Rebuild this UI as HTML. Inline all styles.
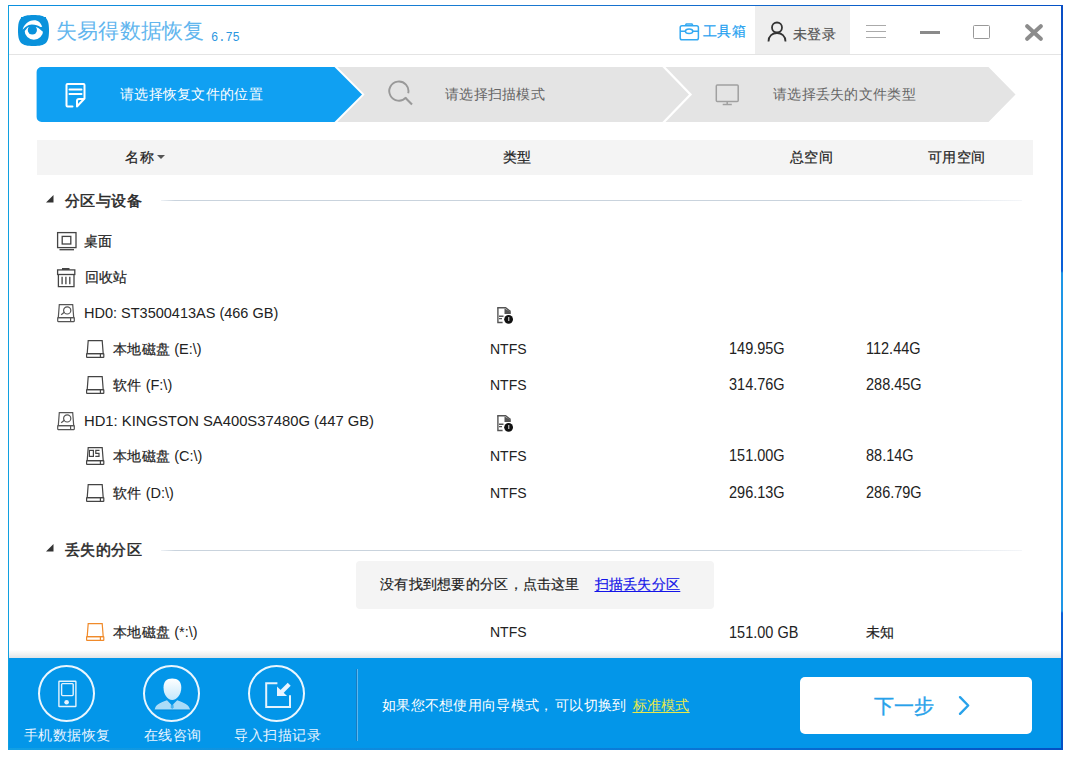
<!DOCTYPE html>
<html><head><meta charset="utf-8">
<style>
*{box-sizing:border-box;margin:0;padding:0}
html,body{width:1074px;height:760px;background:#fff;overflow:hidden;font-family:"Liberation Sans",sans-serif;color:#222}
.abs{position:absolute}
.t{position:absolute;white-space:nowrap;line-height:1}
.sk{-webkit-text-stroke:0.2px currentColor}
</style></head><body>
<div class="abs" style="left:9px;top:54px;width:1052px;height:1px;background:#e4e4e4"></div>
<div class="abs" style="left:755px;top:6px;width:95px;height:48px;background:#eeeeee"></div>
<svg class="abs" style="left:18px;top:14.5px" width="31" height="31" viewBox="65 50 650 650">
<path d="M390 50 C650 50 715 115 715 375 C715 635 650 700 390 700 C130 700 65 635 65 375 C65 115 130 50 390 50Z" fill="#0a92dc"/>
</svg>
<svg class="abs" style="left:21px;top:17px" width="25" height="25" viewBox="0 0 760 760">
<circle cx="392" cy="410" r="282" fill="#fff"/>
<path d="M0 0 H760 V470 L675 458 L565 365 C520 310 420 292 330 298 C270 303 225 312 200 322 L108 430 L0 440 Z" fill="#0a92dc"/>
<circle cx="345" cy="395" r="140" fill="#0a92dc"/>
<path d="M50 390 C80 250 220 100 400 100 C520 100 610 180 645 300 L590 305 C530 250 440 225 330 225 C200 230 100 320 50 390 Z" fill="#fff"/>
</svg>
<div class="t" style="left:56px;top:20px;font-size:21px;color:#62b6ee;letter-spacing:0.2px;">失易得数据恢复</div>
<div class="t" style="left:211px;top:32px;font-size:12px;color:#2a96e0;font-family:'Liberation Mono',monospace">6.75</div>
<svg class="abs" style="left:679px;top:22px" width="21" height="20" viewBox="0 0 21 20">
<g fill="none" stroke="#33a9f2" stroke-width="1.5">
<rect x="1.2" y="3.7" width="18.2" height="14.1" rx="1.8"/>
<path d="M6.3 3.7 L7.3 1.9 H12.9 L13.9 3.7"/>
<path d="M1.2 9.2 H6.4 M13.8 9.2 H19.4"/>
<ellipse cx="10.1" cy="9.3" rx="3.7" ry="2.3"/>
</g></svg>
<div class="t sk" style="left:703px;top:24px;font-size:14px;color:#1e9ff0;letter-spacing:0.3px;">工具箱</div>
<svg class="abs" style="left:767px;top:21px" width="20" height="21" viewBox="0 0 20 21">
<g fill="none" stroke="#333" stroke-width="1.8">
<circle cx="10" cy="6.5" r="5"/>
<path d="M1.5 20.5 C1.5 15 5.5 12 10 12 C14.5 12 18.5 15 18.5 20.5"/>
</g></svg>
<div class="t sk" style="left:793px;top:27px;font-size:14px;color:#555;letter-spacing:0.3px;">未登录</div>
<div class="abs" style="left:866px;top:25px;width:20px;height:1.4px;background:#aaa"></div>
<div class="abs" style="left:866px;top:31px;width:20px;height:1.4px;background:#aaa"></div>
<div class="abs" style="left:866px;top:37px;width:20px;height:1.4px;background:#aaa"></div>
<div class="abs" style="left:920px;top:31.4px;width:20px;height:2.2px;background:#8a8a8a"></div>
<div class="abs" style="left:973.3px;top:25.3px;width:16.5px;height:14px;border:1.8px solid #999;border-radius:1.5px"></div>
<svg class="abs" style="left:1025px;top:24px" width="18" height="17" viewBox="0 0 18 17">
<path d="M2.2 2.2 L15.8 14.8 M15.8 2.2 L2.2 14.8" stroke="#8c8c8c" stroke-width="4" stroke-linecap="round"/>
</svg>
<svg class="abs" style="left:36px;top:67px" width="990" height="55" viewBox="0 0 990 55">
<path d="M301.3 0 H952.5 L979.5 27.5 L952.5 55 H301.3 L328.6 27.5 Z" fill="#e4e4e4"/>
<path d="M0.6 5 A5 5 0 0 1 5.6 0 H298.5 L326 27.5 L298.5 55 H5.6 A5 5 0 0 1 0.6 50 Z" fill="#10a0f2"/>
<path d="M627 -1 L654.5 27.5 L627 56" fill="none" stroke="#fff" stroke-width="2.3"/>
</svg>
<svg class="abs" style="left:60px;top:78px" width="32" height="34" viewBox="0 0 32 34">
<g fill="none" stroke="#fff" stroke-width="2" stroke-linecap="round" stroke-linejoin="round">
<path d="M12.5 28.5 H7.5 Q6.5 28.5 6.5 27.5 V7 Q6.5 6 7.5 6 H23.5 Q24.5 6 24.5 7 V20.5"/>
<path d="M9.5 11.5 H21.5 M9.5 16 H21.5"/>
<path d="M17 28.5 V23 Q17 21 19 21 H24 L17 28.5"/>
</g></svg>
<svg class="abs" style="left:387px;top:80px" width="28" height="28" viewBox="0 0 28 28">
<g fill="none" stroke="#999" stroke-width="1.9">
<path d="M21.2 13.3 A9.6 9.6 0 1 0 19.1 17.4"/>
<path d="M18.3 17.8 L25 24.6" stroke-width="2.1"/>
</g></svg>
<svg class="abs" style="left:715px;top:83px" width="25" height="24" viewBox="0 0 25 24">
<g fill="none" stroke="#a0a0a0" stroke-width="1.5">
<rect x="1.3" y="1.9" width="21.9" height="16.6" rx="1"/>
<path d="M12.2 18.5 V21.2 M7.7 21.6 H16.8"/>
</g></svg>
<div class="t" style="left:120px;top:87px;font-size:14px;color:#fff;letter-spacing:0.3px;">请选择恢复文件的位置</div>
<div class="t" style="left:445px;top:87px;font-size:14px;color:#666;letter-spacing:0.3px;">请选择扫描模式</div>
<div class="t" style="left:773px;top:87px;font-size:14px;color:#666;letter-spacing:0.3px;">请选择丢失的文件类型</div>
<div class="abs" style="left:37px;top:140px;width:996px;height:35px;background:#f4f4f4"></div>
<div class="t sk" style="left:125px;top:150px;font-size:14px;color:#222;letter-spacing:0.6px;">名称</div>
<svg class="abs" style="left:157px;top:155px" width="8" height="4"><path d="M0 0 H8 L4 4Z" fill="#555"/></svg>
<div class="t sk" style="left:503px;top:150px;font-size:14px;color:#222;letter-spacing:0.3px;">类型</div>
<div class="t sk" style="left:790px;top:150px;font-size:14px;color:#222;letter-spacing:0.3px;">总空间</div>
<div class="t sk" style="left:928px;top:150px;font-size:14px;color:#222;letter-spacing:0.3px;">可用空间</div>
<svg class="abs" style="left:46px;top:195px" width="8" height="8"><path d="M7.5 0 V7.5 H0Z" fill="#333"/></svg>
<div class="t" style="left:65px;top:192.5px;font-size:15px;color:#2a2a2a;letter-spacing:0.4px;-webkit-text-stroke:0.5px #2a2a2a">分区与设备</div>
<div class="abs" style="left:161px;top:200px;width:861px;height:1px;background:linear-gradient(90deg,#eef2f6 0,#c9d3dd 14px,#c9d3dd 720px,#f4f6f9 100%)"></div>
<svg class="abs" style="left:56px;top:231px" width="22" height="21" viewBox="0 0 22 21">
<g fill="none" stroke="#444" stroke-width="1.3">
<rect x="1.6" y="1.6" width="18.4" height="15"/>
<rect x="6.2" y="5.4" width="8.6" height="7.6"/>
<path d="M3.5 18.7 H18"/>
</g></svg>
<div class="t sk" style="left:84px;top:234px;font-size:14px;color:#222;letter-spacing:0.3px;">桌面</div>
<svg class="abs" style="left:56px;top:267px" width="21" height="21" viewBox="0 0 21 21">
<g fill="none" stroke="#444" stroke-width="1.3">
<rect x="1.6" y="2.9" width="17.2" height="4.6"/>
<path d="M2.4 7.5 V19.6 H18 V7.5"/>
<path d="M6.1 9.8 V17.2 M9.9 9.8 V17.2 M13.8 9.8 V17.2"/>
</g><rect x="6" y="1" width="7.5" height="2" fill="#444"/></svg>
<div class="t sk" style="left:84.5px;top:270px;font-size:14px;color:#222;letter-spacing:0.3px;">回收站</div>
<svg class="abs" style="left:55px;top:302px" width="22" height="22" viewBox="0 0 22 22">
<g fill="none" stroke="#555" stroke-width="1.2">
<path d="M3.3 15.6 L4.3 2.6 H17.7 L18.7 15.6 Z"/>
<rect x="2.7" y="15.6" width="16.6" height="4" rx="0.5"/>
<path d="M15.6 15.8 V19.4"/>
<circle cx="12.2" cy="8.4" r="3.6"/>
<path d="M6.2 12.8 L9.6 10"/>
</g></svg>
<div class="t" style="left:84px;top:306px;font-size:14.5px;color:#222;">HD0: ST3500413AS (466 GB)</div>
<svg class="abs" style="left:495px;top:306px" width="18" height="20" viewBox="0 0 18 20">
<g fill="none" stroke="#555" stroke-width="1.4">
<path d="M2.9 1.8 V16.5 H7.6"/>
<path d="M2.2 1.8 H10.6 L15.6 5.6"/>
<path d="M4 10.2 H8.5 M4 12.6 H7"/>
</g>
<path d="M9.5 2.5 L15.8 6 V8 H9.5Z" fill="#555"/>
<circle cx="13.6" cy="13.3" r="4.4" fill="#111"/>
<rect x="13" y="11" width="1.4" height="4" fill="#aaa"/>
</svg>
<svg class="abs" style="left:84px;top:339px" width="22" height="22" viewBox="0 0 22 22">
<g fill="none" stroke="#444" stroke-width="1.2">
<path d="M3.2 14.6 L4.2 1.6 H18.2 L19.2 14.6 Z"/>
<rect x="2.6" y="14.6" width="17.2" height="3.8" rx="0.5"/>
<path d="M16.4 14.8 V18.2"/>
</g></svg>
<div class="t" style="left:113px;top:342px;font-size:14.5px;color:#222;"><span class="sk" style="font-size:14px;letter-spacing:0.3px">本地磁盘</span> (E:\)</div>
<div class="t" style="left:490px;top:342px;font-size:14px;color:#222;">NTFS</div>
<div class="t" style="left:729px;top:342.2px;font-size:14.5px;color:#222;transform:scaleY(1.1);transform-origin:0 13px">149.95G</div>
<div class="t" style="left:866px;top:342.2px;font-size:14.5px;color:#222;transform:scaleY(1.1);transform-origin:0 13px">112.44G</div>
<svg class="abs" style="left:84px;top:375px" width="22" height="22" viewBox="0 0 22 22">
<g fill="none" stroke="#444" stroke-width="1.2">
<path d="M3.2 14.6 L4.2 1.6 H18.2 L19.2 14.6 Z"/>
<rect x="2.6" y="14.6" width="17.2" height="3.8" rx="0.5"/>
<path d="M16.4 14.8 V18.2"/>
</g></svg>
<div class="t" style="left:113px;top:378px;font-size:14.5px;color:#222;"><span class="sk" style="font-size:14px;letter-spacing:0.3px">软件</span> (F:\)</div>
<div class="t" style="left:490px;top:378px;font-size:14px;color:#222;">NTFS</div>
<div class="t" style="left:729px;top:378.2px;font-size:14.5px;color:#222;transform:scaleY(1.1);transform-origin:0 13px">314.76G</div>
<div class="t" style="left:866px;top:378.2px;font-size:14.5px;color:#222;transform:scaleY(1.1);transform-origin:0 13px">288.45G</div>
<svg class="abs" style="left:55px;top:410px" width="22" height="22" viewBox="0 0 22 22">
<g fill="none" stroke="#555" stroke-width="1.2">
<path d="M3.3 15.6 L4.3 2.6 H17.7 L18.7 15.6 Z"/>
<rect x="2.7" y="15.6" width="16.6" height="4" rx="0.5"/>
<path d="M15.6 15.8 V19.4"/>
<circle cx="12.2" cy="8.4" r="3.6"/>
<path d="M6.2 12.8 L9.6 10"/>
</g></svg>
<div class="t" style="left:84px;top:414px;font-size:14.8px;color:#222;">HD1: KINGSTON SA400S37480G (447 GB)</div>
<svg class="abs" style="left:495px;top:414px" width="18" height="20" viewBox="0 0 18 20">
<g fill="none" stroke="#555" stroke-width="1.4">
<path d="M2.9 1.8 V16.5 H7.6"/>
<path d="M2.2 1.8 H10.6 L15.6 5.6"/>
<path d="M4 10.2 H8.5 M4 12.6 H7"/>
</g>
<path d="M9.5 2.5 L15.8 6 V8 H9.5Z" fill="#555"/>
<circle cx="13.6" cy="13.3" r="4.4" fill="#111"/>
<rect x="13" y="11" width="1.4" height="4" fill="#aaa"/>
</svg>
<svg class="abs" style="left:84px;top:446px" width="22" height="22" viewBox="0 0 22 22">
<g fill="none" stroke="#444" stroke-width="1.2">
<path d="M3.2 14.6 L4.2 1.6 H18.2 L19.2 14.6 Z"/>
<rect x="2.6" y="14.6" width="17.2" height="3.8" rx="0.5"/>
<path d="M16.4 14.8 V18.2"/>
</g><g fill="none" stroke="#444" stroke-width="1.2"><rect x="5.4" y="4.4" width="4" height="6"/><path d="M15.5 4.4 H11.8 V7.4 H15 V10.4 H11.3"/></g></svg>
<div class="t" style="left:113px;top:449px;font-size:14.5px;color:#222;"><span class="sk" style="font-size:14px;letter-spacing:0.3px">本地磁盘</span> (C:\)</div>
<div class="t" style="left:490px;top:449px;font-size:14px;color:#222;">NTFS</div>
<div class="t" style="left:729px;top:449.2px;font-size:14.5px;color:#222;transform:scaleY(1.1);transform-origin:0 13px">151.00G</div>
<div class="t" style="left:866px;top:449.2px;font-size:14.5px;color:#222;transform:scaleY(1.1);transform-origin:0 13px">88.14G</div>
<svg class="abs" style="left:84px;top:483px" width="22" height="22" viewBox="0 0 22 22">
<g fill="none" stroke="#444" stroke-width="1.2">
<path d="M3.2 14.6 L4.2 1.6 H18.2 L19.2 14.6 Z"/>
<rect x="2.6" y="14.6" width="17.2" height="3.8" rx="0.5"/>
<path d="M16.4 14.8 V18.2"/>
</g></svg>
<div class="t" style="left:113px;top:486px;font-size:14.5px;color:#222;"><span class="sk" style="font-size:14px;letter-spacing:0.3px">软件</span> (D:\)</div>
<div class="t" style="left:490px;top:486px;font-size:14px;color:#222;">NTFS</div>
<div class="t" style="left:729px;top:486.2px;font-size:14.5px;color:#222;transform:scaleY(1.1);transform-origin:0 13px">296.13G</div>
<div class="t" style="left:866px;top:486.2px;font-size:14.5px;color:#222;transform:scaleY(1.1);transform-origin:0 13px">286.79G</div>
<svg class="abs" style="left:46px;top:544px" width="8" height="8"><path d="M7.5 0 V7.5 H0Z" fill="#333"/></svg>
<div class="t" style="left:65px;top:541.5px;font-size:15px;color:#2a2a2a;letter-spacing:0.4px;-webkit-text-stroke:0.5px #2a2a2a">丢失的分区</div>
<div class="abs" style="left:161px;top:550px;width:861px;height:1px;background:linear-gradient(90deg,#eef2f6 0,#c9d3dd 14px,#c9d3dd 720px,#f4f6f9 100%)"></div>
<div class="abs" style="left:356px;top:561px;width:358px;height:48px;background:#f4f4f4;border-radius:4px"></div>
<div class="t sk" style="left:380px;top:577px;font-size:14px;color:#222;letter-spacing:0.3px;">没有找到想要的分区，</div>
<div class="t sk" style="left:522.5px;top:577px;font-size:14px;color:#222;letter-spacing:0.3px;">点击这里</div>
<div class="t sk" style="left:594.5px;top:577px;font-size:14px;color:#1414e8;letter-spacing:0.3px;text-decoration:underline;text-underline-offset:2px">扫描丢失分区</div>
<svg class="abs" style="left:84px;top:622px" width="22" height="22" viewBox="0 0 22 22">
<g fill="none" stroke="#f08a2a" stroke-width="1.2">
<path d="M3.2 14.6 L4.2 1.6 H18.2 L19.2 14.6 Z"/>
<rect x="2.6" y="14.6" width="17.2" height="3.8" rx="0.5"/>
<path d="M16.4 14.8 V18.2"/>
</g></svg>
<div class="t" style="left:113px;top:625px;font-size:14.5px;color:#222;"><span class="sk" style="font-size:14px;letter-spacing:0.3px">本地磁盘</span> (*:\)</div>
<div class="t" style="left:490px;top:625px;font-size:14px;color:#222;">NTFS</div>
<div class="t" style="left:729px;top:625.5px;font-size:14.5px;color:#222;transform:scaleY(1.1);transform-origin:0 13px">151.00 GB</div>
<div class="t sk" style="left:866px;top:625px;font-size:14px;color:#222;letter-spacing:0.3px;">未知</div>
<div class="abs" style="left:9px;top:650px;width:1052px;height:8px;background:linear-gradient(#fff,#f0f0f0 60%,#e0e4e8)"></div>
<div class="abs" style="left:9px;top:658px;width:1052px;height:91px;background:#0396e9"></div>
<div class="abs" style="left:38px;top:665px;width:57px;height:57px;border:2px solid #eaf6fe;border-radius:50%"></div>
<div class="abs" style="left:143px;top:665px;width:57px;height:57px;border:2px solid #eaf6fe;border-radius:50%"></div>
<div class="abs" style="left:248px;top:665px;width:57px;height:57px;border:2px solid #eaf6fe;border-radius:50%"></div>
<svg class="abs" style="left:35px;top:662px" width="64" height="64" viewBox="0 0 64 64">
<g fill="none" stroke="#e4f3fd" stroke-width="1.4"><rect x="23.9" y="19.2" width="17" height="25.3" rx="0.5"/><rect x="26.6" y="21.6" width="11.6" height="12" rx="1"/></g>
<circle cx="31.6" cy="40.2" r="2.3" fill="#e8f4ff"/></svg>
<svg class="abs" style="left:140px;top:662px" width="64" height="64" viewBox="0 0 64 64">
<defs><linearGradient id="pg" x1="0" y1="0" x2="0" y2="1"><stop offset="0" stop-color="#ffffff"/><stop offset="1" stop-color="#c4e8fc"/></linearGradient></defs>
<path d="M32.2 16.4 C38 16.4 41.3 19.5 41.3 25.5 C41.3 32.5 37 37.9 32.2 37.9 C27.4 37.9 23.5 32.5 23.5 25.5 C23.5 19.5 26.5 16.4 32.2 16.4Z" fill="url(#pg)"/>
<path d="M14.7 47.6 C15.5 43 19 40.8 27 38.2 L32 43.5 L37.2 38.2 C45 40.8 49 43 50.1 47.6 Z" fill="#aadcf8"/>
<path d="M31 42.4 H33.4 L33.8 45.5 L32.2 47 L30.6 45.5Z" fill="#0797ea" opacity="0.6"/>
<rect x="15" y="47.6" width="35" height="1.2" fill="#0680cc" opacity="0.35"/>
</svg>
<svg class="abs" style="left:245px;top:662px" width="64" height="64" viewBox="0 0 64 64">
<g fill="none" stroke="#e4f3fd" stroke-width="2"><path d="M32.4 21.2 H21.2 V45 H45 V33.3"/></g>
<path d="M32 24.4 V34.1 H42.1 Z" fill="#e8f4ff"/>
<path d="M44.2 22.2 L36 30.4" stroke="#e8f4ff" stroke-width="4.2" fill="none"/>
</svg>
<div class="abs" style="left:356px;top:669px;width:1px;height:72px;background:#1a7cc0"></div>
<div class="abs" style="left:357px;top:669px;width:1px;height:72px;background:#5ab8f0"></div>
<div class="abs" style="left:800px;top:677px;width:232px;height:57px;background:#fff;border-radius:5px"></div>
<svg class="abs" style="left:958px;top:695px" width="13" height="21" viewBox="0 0 13 21"><path d="M2 2.2 L10.2 10.5 L2 18.8" fill="none" stroke="#28a2ea" stroke-width="2.4" stroke-linecap="round" stroke-linejoin="round"/></svg>
<div class="t" style="left:23.5px;top:728px;font-size:14px;color:#e8f4ff;letter-spacing:0.5px;">手机数据恢复</div>
<div class="t" style="left:143.5px;top:728px;font-size:14px;color:#e8f4ff;letter-spacing:0.5px;">在线咨询</div>
<div class="t" style="left:234px;top:728px;font-size:14px;color:#e8f4ff;letter-spacing:0.5px;">导入扫描记录</div>
<div class="t" style="left:382px;top:698px;font-size:14px;color:#fff;letter-spacing:0.3px;">如果您不想使用向导模式，</div>
<div class="t" style="left:555px;top:698px;font-size:14px;color:#fff;letter-spacing:0.3px;">可以切换到</div>
<div class="t" style="left:632.5px;top:698px;font-size:14px;color:#e8e84a;letter-spacing:0.3px;text-decoration:underline;text-underline-offset:2px">标准模式</div>
<div class="t" style="left:874px;top:695.5px;font-size:20px;color:#28a2ea;letter-spacing:0px;-webkit-text-stroke:0.4px #28a2ea">下一步</div>
<div class="abs" style="left:8px;top:5px;width:1054px;height:1px;background:linear-gradient(90deg,#0b90df,#1a78d0 50%,#0552c6)"></div>
<div class="abs" style="left:8px;top:5px;width:1px;height:745px;background:#10a0e0"></div>
<div class="abs" style="left:1061px;top:5px;width:1.5px;height:745px;background:linear-gradient(#0a4ec4 0,#0a60d8 266px,#1e96e6 268px,#1e96e6 606px,#0a60d8 608px,#0450c4 100%)"></div>
<div class="abs" style="left:8px;top:748px;width:1054px;height:2px;background:linear-gradient(90deg,#12a0e4,#0a7ad8 60%,#0450c4)"></div>
</body></html>
